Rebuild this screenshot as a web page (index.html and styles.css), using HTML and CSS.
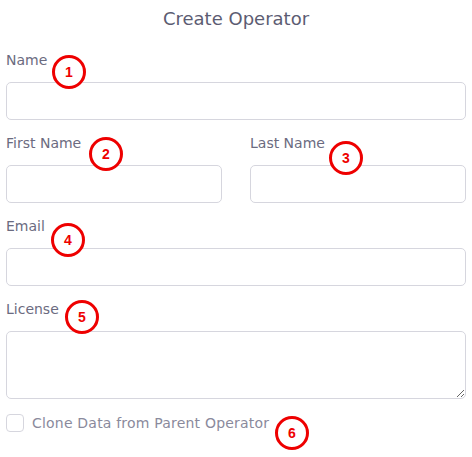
FILE: index.html
```html
<html lang="en">

<head>
    <meta charset="UTF-8">
    <meta name="viewport" content="width=device-width, initial-scale=1.0">
    <title>Create Operator</title>
    <link rel="stylesheet" href="styles.css">
</head>

<body>
    <div class="modal">
        <h1>Create Operator</h1>

        <div class="field">
            <label for="name">Name</label>
            <input type="text" id="name">
        </div>

        <div class="row">
            <div class="field">
                <label for="first-name">First Name</label>
                <input type="text" id="first-name">
            </div>
            <div class="field">
                <label for="last-name">Last Name</label>
                <input type="text" id="last-name">
            </div>
        </div>

        <div class="field">
            <label for="email">Email</label>
            <input type="text" id="email">
        </div>

        <div class="field">
            <label for="license">License</label>
            <textarea id="license"></textarea>
        </div>

        <label class="check">
            <input type="checkbox" id="clone">
            <span>Clone Data from Parent Operator</span>
        </label>

        <span class="mark m1">1</span>
        <span class="mark m2">2</span>
        <span class="mark m3">3</span>
        <span class="mark m4">4</span>
        <span class="mark m5">5</span>
        <span class="mark m6">6</span>
    </div>
</body>

</html>
```

FILE: styles.css
```css
body {
    font-family: "DejaVu Sans", sans-serif;
    margin: 0;
    padding: 0;
    background-color: white;
    color: #6b6b80;
}

.modal {
    position: relative;
    padding: 8px 6px 0 6px;
}

h1 {
    margin: 0 0 22px 0;
    font-size: 18px;
    line-height: 22px;
    font-weight: normal;
    text-align: center;
    color: #5c5c72;
}

.field {
    margin-bottom: 15px;
}

.field label {
    display: block;
    font-size: 14px;
    line-height: 17px;
    margin-bottom: 13px;
}

.field input,
.field textarea {
    display: block;
    width: 100%;
    box-sizing: border-box;
    height: 38px;
    margin: 0;
    border: 1px solid #d6d6de;
    border-radius: 5px;
    font-family: inherit;
}

.field textarea {
    height: 68px;
}

.row {
    display: grid;
    grid-template-columns: 1fr 1fr;
    column-gap: 28px;
}

.check {
    display: flex;
    align-items: center;
    gap: 8px;
    margin-top: 7px;
    font-size: 14px;
    letter-spacing: 0.2px;
    color: #8a8a9c;
}

.check input {
    appearance: none;
    width: 18px;
    height: 18px;
    margin: 0;
    border: 1px solid #d6d6de;
    border-radius: 4px;
}

.mark {
    position: absolute;
    width: 28px;
    height: 28px;
    border: 3px solid #ee0000;
    border-radius: 50%;
    background: white;
    color: #ee0000;
    font-family: "Liberation Sans", Arial, sans-serif;
    font-weight: bold;
    font-size: 14px;
    line-height: 28px;
    text-align: center;
}

.m1 { left: 52px; top: 55px; }
.m2 { left: 89px; top: 137px; }
.m3 { left: 329px; top: 141px; }
.m4 { left: 51px; top: 223px; }
.m5 { left: 65px; top: 300px; }
.m6 { left: 275px; top: 416px; }
```
